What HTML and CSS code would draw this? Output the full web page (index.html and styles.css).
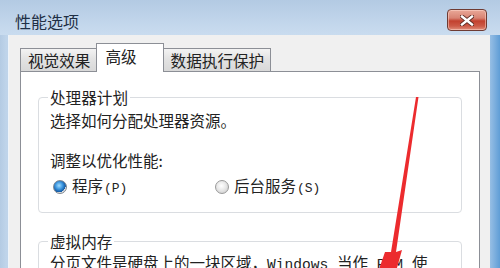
FILE: index.html
```html
<!DOCTYPE html>
<html lang="zh">
<head>
<meta charset="utf-8">
<title>性能选项</title>
<link rel="stylesheet" href="styles.css">
</head>
<body>
<div class="window">
  <div class="titlebar">
    <span class="title">性能选项</span>
    <span class="close">
      <svg width="14" height="11" viewBox="0 0 14 11">
        <path d="M2 1.5 L12 9.5 M12 1.5 L2 9.5" stroke="#5a2a22" stroke-width="4.2" stroke-linecap="square" fill="none"/>
        <path d="M2 1.5 L12 9.5 M12 1.5 L2 9.5" stroke="#ffffff" stroke-width="2.4" stroke-linecap="square" fill="none"/>
      </svg>
    </span>
  </div>
  <div class="client">
    <div class="tabs">
      <div class="tab">视觉效果</div>
      <div class="tab active">高级</div>
      <div class="tab">数据执行保护</div>
    </div>
    <div class="panel">
      <fieldset class="group first">
        <legend>处理器计划</legend>
        <p class="line">选择如何分配处理器资源。</p>
        <p class="line second">调整以优化性能:</p>
        <div class="radios">
          <label class="radio"><span class="dot on"></span><span>程序<span class="latin">(P)</span></span></label>
          <label class="radio"><span class="dot"></span><span>后台服务<span class="latin">(S)</span></span></label>
        </div>
      </fieldset>
      <fieldset class="group vm">
        <legend>虚拟内存</legend>
        <p class="line">分页文件是硬盘上的一块区域，<span class="latin">Windows </span>当作<span class="latin"> RAM </span>使<br>用。</p>
      </fieldset>
    </div>
  </div>
  <svg class="arrow" width="500" height="268" viewBox="0 0 500 268">
    <polygon points="416,97 418.5,97 396,252 402,250 395,275 377,275 385,252 391,252" fill="#ec2b2e"/>
  </svg>
</div>
</body>
</html>
```

FILE: styles.css
```css
* { box-sizing: border-box; }
html, body { margin: 0; padding: 0; }
body {
  width: 500px;
  height: 268px;
  overflow: hidden;
  font-family: "Noto Sans CJK SC", "Noto Sans", sans-serif;
  color: #222;
}
.window {
  position: relative;
  width: 500px;
  height: 268px;
  overflow: hidden;
  display: flex;
  flex-direction: column;
  background: linear-gradient(to right, #b4cbe3 0, #bfd4ea 6px, #c9dcef 480px, #8cb8e2 492px, #5f9dd6 500px);
}
.titlebar {
  height: 35px;
  flex: none;
  display: flex;
  align-items: center;
  justify-content: space-between;
  padding: 0 13px 0 15px;
  background: linear-gradient(#b3cae3, #c3d7ec 70%, #c9dcef);
}
.title {
  font-size: 16px;
  line-height: 20px;
  color: #1f2f45;
  margin-top: 7px;
}
.close {
  width: 40px;
  height: 22px;
  margin-top: 5px;
  border: 1px solid #6e3b33;
  border-radius: 4px;
  display: flex;
  align-items: center;
  justify-content: center;
  background: linear-gradient(#e9a898 0, #d88474 40%, #c2412f 55%, #cc5a47 80%, #e0907d 100%);
  box-shadow: inset 0 0 0 1px rgba(255, 220, 210, 0.5);
}
.client {
  flex: 1;
  margin: 0 10px 0 8px;
  border-left: 1px solid #eef4fa;
  background: #f0f0f0;
  padding: 8px 10px 0 11px;
  display: flex;
  flex-direction: column;
}
.tabs {
  display: flex;
  align-items: flex-end;
  height: 28px;
  position: relative;
  z-index: 1;
}
.tab {
  height: 23px;
  padding: 0 6px 0 7px;
  font-size: 15.6px;
  line-height: 22px;
  border: 1px solid #8c8f96;
  border-bottom: none;
  background: linear-gradient(#f3f3f3, #e3e3e3 45%, #d8d8d8);
  color: #222;
  white-space: nowrap;
}
.tab + .tab { margin-left: -1px; }
.tab.active {
  height: 29px;
  margin-bottom: -1px;
  padding: 0 26px 0 8px;
  background: #fff;
  line-height: 25px;
  border-color: #8c8f96;
}
.panel {
  flex: 1;
  background: #fff;
  border: 1px solid #8c8f96;
  border-bottom: none;
  padding: 16px 17px 0 17px;
  display: flex;
  flex-direction: column;
}
.group {
  margin: 0;
  border: 1px solid #dadde1;
  border-radius: 4px;
  padding: 4px 10px 15px 11px;
  min-width: 0;
}
.group legend {
  padding: 0 2px;
  margin-left: -2px;
  font-size: 15.6px;
  line-height: 18px;
  color: #222;
}
.group.vm {
  margin-top: 19px;
  padding-top: 2px;
}
.line {
  margin: 0;
  font-size: 15.5px;
  line-height: 20px;
  white-space: nowrap;
}
.line.second { margin-top: 20px; }
.latin {
  font-family: "Liberation Mono", monospace;
  font-size: 14.6px;
}
.radios {
  display: flex;
  margin-top: 7px;
  height: 20px;
  align-items: center;
}
.radio {
  display: flex;
  align-items: center;
  font-size: 15.5px;
  line-height: 20px;
  width: 162px;
  padding-left: 3px;
}
.radio .latin { font-size: 13px; margin-left: 1px; }
.dot {
  width: 14px;
  height: 14px;
  border-radius: 50%;
  border: 1px solid #9a9a9a;
  margin-right: 5px;
  background: radial-gradient(circle at 45% 40%, #ffffff 0, #e8e8e8 45%, #c4c4c4 100%);
  flex: none;
}
.dot.on {
  border-color: #7d8690;
  background:
    radial-gradient(circle at 42% 38%, #9fdcff 0, #3d97e0 35%, #175ea8 60%, #175ea8 64%, transparent 66%),
    radial-gradient(circle, #f4f4f4 0, #d6d6d6 100%);
}
.arrow {
  position: absolute;
  left: 0;
  top: 0;
  pointer-events: none;
  z-index: 2;
}
```
